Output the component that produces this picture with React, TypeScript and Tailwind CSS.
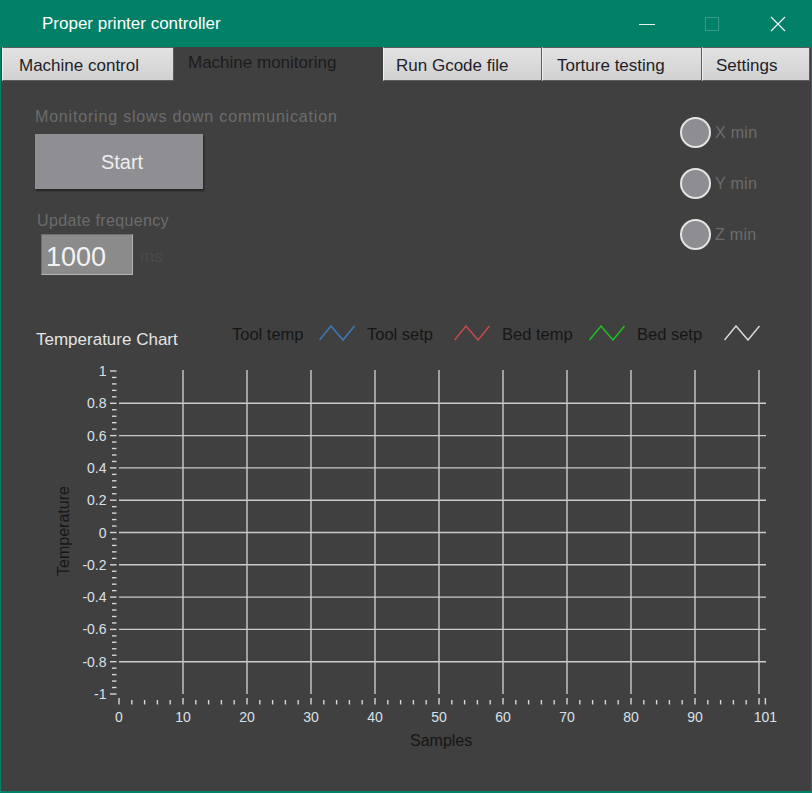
import React from "react";

const yPos = (v: number) => 533.5 - 161.5 * v;
const xPos = (u: number) => 119 + 6.4 * u;

const tabs = [
  { label: "Machine control", w: "w-[172px]", pl: "pl-[16px]" },
  { label: "Machine monitoring", w: "w-[209px]", pl: "pl-[14px]", active: true },
  { label: "Run Gcode file", w: "w-[159px]", pl: "pl-[12px]" },
  { label: "Torture testing", w: "w-[160px]", pl: "pl-[14px]" },
  { label: "Settings", w: "w-[108px]", pl: "pl-[13px]" },
];

const legend = [
  { label: "Tool temp", color: "#3b7bbd" },
  { label: "Tool setp", color: "#c64a4c" },
  { label: "Bed temp", color: "#20c020" },
  { label: "Bed setp", color: "#dadada" },
];

const radios = ["X min", "Y min", "Z min"];

const yMajor = [1, 0.8, 0.6, 0.4, 0.2, 0, -0.2, -0.4, -0.6, -0.8, -1];
const xMajor = [0, 10, 20, 30, 40, 50, 60, 70, 80, 90, 100];
const xLabels = [0, 10, 20, 30, 40, 50, 60, 70, 80, 90, 101];

const TitleBar = () => (
  <div className="flex h-[47px] items-center bg-[#017f67] text-white">
    <span className="pl-[41px] pt-[1px] text-[17px]">Proper printer controller</span>
    <div className="ml-auto flex items-center">
      <svg width="16" height="16" className="mr-[49px]">
        <line x1="0" y1="8.5" x2="16" y2="8.5" stroke="#e8f3f0" strokeWidth="1" />
      </svg>
      <svg width="16" height="16" className="mr-[50px]">
        <rect x="1.5" y="1.5" width="13" height="13" fill="none" stroke="#3a9c87" strokeWidth="1" />
      </svg>
      <svg width="16" height="16" className="mr-[25px]">
        <path d="M1 1 L15 15 M15 1 L1 15" stroke="#f2f2f2" strokeWidth="1.2" />
      </svg>
    </div>
  </div>
);

const TabBar = () => (
  <div className="flex h-[34px] pl-[1px]">
    {tabs.map((t) =>
      t.active ? (
        <div key={t.label} className={`${t.w} ${t.pl} pt-[3px] text-[17px] text-[#1c1c1c]`}>
          {t.label}
        </div>
      ) : (
        <div
          key={t.label}
          className={`${t.w} ${t.pl} flex items-center border border-[#5c5c5c] border-l-[#f0f0f0] bg-gradient-to-b from-[#e2e2e2] to-[#d2d2d2] pt-[3px] text-[17px] text-[#1e1e28]`}
        >
          {t.label}
        </div>
      ),
    )}
  </div>
);

const Chart = () => (
  <svg width="810" height="408" viewBox="1 352 810 408" className="block">
    {yMajor
      .filter((v) => v !== 1 && v !== -1)
      .map((v) => (
        <line key={`h${v}`} x1="119" x2="766" y1={yPos(v)} y2={yPos(v)} stroke="#cbcbcb" strokeWidth="1.4" />
      ))}
    {xMajor
      .filter((u) => u !== 0)
      .map((u) => (
        <line key={`v${u}`} x1={xPos(u)} x2={xPos(u)} y1="371" y2="695" stroke="#cbcbcb" strokeWidth="1.4" />
      ))}
    {Array.from({ length: 51 }, (_, i) => {
      const major = i % 5 === 0;
      const y = yPos(1 - i * 0.04);
      return (
        <line key={`yt${i}`} x1={major ? 110 : 112} x2="116.5" y1={y} y2={y} stroke="#d6d6d6" strokeWidth="1.4" />
      );
    })}
    {Array.from({ length: 51 }, (_, i) => {
      const major = i % 5 === 0;
      const x = xPos(i * 2);
      return (
        <line key={`xt${i}`} x1={x} x2={x} y1={major ? 699 : 701} y2="705.5" stroke="#d6d6d6" strokeWidth="1.4" />
      );
    })}
    <line x1={xPos(101)} x2={xPos(101)} y1="699" y2="705.5" stroke="#d6d6d6" strokeWidth="1.4" />
    {yMajor.map((v) => (
      <text
        key={`yl${v}`}
        x="106.5"
        y={yPos(v)}
        textAnchor="end"
        dominantBaseline="central"
        fontSize="14"
        fill="#dbe0e6"
        fontFamily="Liberation Sans, Arial, sans-serif"
      >
        {String(v)}
      </text>
    ))}
    {xLabels.map((u) => (
      <text
        key={`xl${u}`}
        x={xPos(u)}
        y="718"
        textAnchor="middle"
        dominantBaseline="central"
        fontSize="14"
        fill="#dbe0e6"
        fontFamily="Liberation Sans, Arial, sans-serif"
      >
        {u}
      </text>
    ))}
    <text
      x="410"
      y="741"
      dominantBaseline="central"
      fontSize="16"
      fill="#161616"
      fontFamily="Liberation Sans, Arial, sans-serif"
    >
      Samples
    </text>
    <text
      x="63"
      y="532"
      textAnchor="middle"
      dominantBaseline="central"
      fontSize="16"
      fill="#161616"
      fontFamily="Liberation Sans, Arial, sans-serif"
      transform="rotate(-90 63 532)"
    >
      Temperature
    </text>
  </svg>
);

const Zigzag = ({ color }: { color: string }) => (
  <svg width="36" height="16" viewBox="0 0 36 16">
    <polyline points="0.5,15 12,1 24,15 35.5,1" fill="none" stroke={color} strokeWidth="1.5" />
  </svg>
);

export default function App() {
  return (
    <div
      className="flex h-[793px] w-[812px] flex-col overflow-hidden border-x border-b-2 border-[#017f67] bg-[#404040]"
      style={{ fontFamily: '"Liberation Sans", Arial, sans-serif' }}
    >
      <TitleBar />
      <TabBar />
      <div className="flex flex-1 flex-col">
        <div className="flex h-[214px]">
          <div className="flex flex-1 flex-col pl-[34px] pt-[26px]">
            <span className="text-[16px] leading-[20px] tracking-[0.82px] text-[#6c6c6c]">
              Monitoring slows down communication
            </span>
            <button className="mt-[7px] h-[55px] w-[168px] bg-[#8f8e92] pl-[6px] text-[20px] text-[#eeeeee] shadow-[1px_2px_2px_rgba(0,0,0,0.45)]">
              Start
            </button>
            <span className="mt-[22px] ml-[2px] text-[16px] leading-[20px] tracking-[0.35px] text-[#6c6c6c]">
              Update frequency
            </span>
            <div className="mt-[3px] ml-[6px] flex items-center">
              <div className="flex h-[41px] w-[92px] items-center border border-t-[#6e6e6e] border-l-[#6e6e6e] border-r-[#b4b4b4] border-b-[#b4b4b4] bg-[#8b8b8b] pl-[4px] pt-[6px] text-[27px] text-[#f2f2f2]">
                1000
              </div>
              <span className="ml-[7px] pt-[4px] text-[17px] text-[#4b4b4b]">ms</span>
            </div>
          </div>
          <div className="flex w-[131px] flex-col gap-[20px] pt-[36px]">
            {radios.map((r) => (
              <div key={r} className="flex h-[31px] items-center">
                <div className="h-[31px] w-[31px] rounded-full border-[2.5px] border-[#e4e4e4] bg-[#8e8d91]" />
                <span className="ml-[4px] text-[16px] tracking-[0.3px] text-[#6c6c6c]">{r}</span>
              </div>
            ))}
          </div>
        </div>
        <div className="mt-[26px] flex h-[30px]">
          <span className="w-[231px] shrink-0 pl-[35px] pt-[9px] text-[17px] leading-[20px] text-[#e4e4e4]">
            Temperature Chart
          </span>
          <div className="flex pt-[2px]">
            {legend.map((l) => (
              <div key={l.label} className="flex w-[135px] shrink-0 items-start">
                <span className="w-[87px] pt-[1px] text-[16.5px] leading-[20px] text-[#161616]">{l.label}</span>
                <div className="pt-[2px]">
                  <Zigzag color={l.color} />
                </div>
              </div>
            ))}
          </div>
        </div>
        <Chart />
      </div>
    </div>
  );
}
